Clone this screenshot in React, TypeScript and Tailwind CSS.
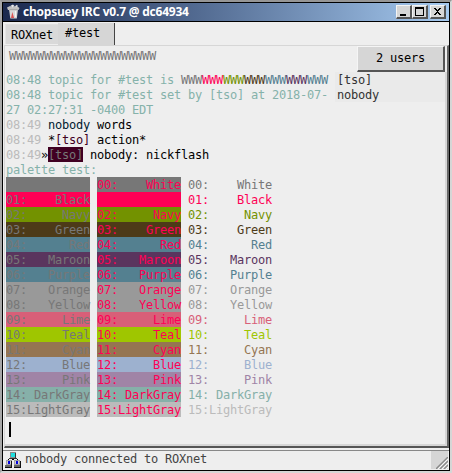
import React from "react";

const palette = [
  { name: "White", color: "#777777" },
  { name: "Black", color: "#ff0055" },
  { name: "Navy", color: "#739200" },
  { name: "Green", color: "#4d3a18" },
  { name: "Red", color: "#548090" },
  { name: "Maroon", color: "#5a355e" },
  { name: "Purple", color: "#548090" },
  { name: "Orange", color: "#999999" },
  { name: "Yellow", color: "#999999" },
  { name: "Lime", color: "#d85f78" },
  { name: "Teal", color: "#9fc600" },
  { name: "Cyan", color: "#957552" },
  { name: "Blue", color: "#9db1cf" },
  { name: "Pink", color: "#a084a6" },
  { name: "DarkGray", color: "#86b0a9" },
  { name: "LightGray", color: "#bbbbbb" },
];

const label = (i: number, name: string) => String(i).padStart(2, "0") + ":" + name.padStart(9, " ");

function PaletteRow({ index }: { index: number }) {
  const { name, color } = palette[index];
  const text = label(index, name);
  return (
    <div className="flex h-[15px] gap-[7px]">
      <span className="w-[84px] text-[#777777]" style={{ backgroundColor: color }}>{text}</span>
      <span className="w-[84px] text-[#ff0055]" style={{ backgroundColor: color }}>{text}</span>
      <span className="w-[84px]" style={{ color }}>{text}</span>
    </div>
  );
}

function TitleButton({ children, className = "" }: { children: React.ReactNode; className?: string }) {
  return (
    <div className={"h-[14px] w-4 border-t border-l border-b-2 border-r-2 border-t-[#f4f4f4] border-l-[#f4f4f4] border-b-[#555] border-r-[#555] bg-[#d6d6d6] " + className}>
      <svg width="13" height="11" viewBox="0 0 13 11" shapeRendering="crispEdges">{children}</svg>
    </div>
  );
}

function TrashIcon() {
  return (
    <svg width="13" height="16" viewBox="0 0 13 16">
      <path d="M2 5h9l-1.2 9.5H3.3z" fill="#d8d8d8" />
      <path d="M0 3.5L3 2l3 1 3-1.5L12.5 4l-1 2H1z" fill="#c2c2c2" />
      <path d="M3.5 1.8l2.5-1.3L7.500 2l-2 1.500zM9 .8l2 1-1.500 1.700z" fill="#e9e9e9" />
      <path d="M2.500 5.700h8" stroke="#999" strokeWidth=".8" />
      <path d="M5.300 8l1.800 6H4z" fill="#dc5555" />
      <path d="M8.500 7v6" stroke="#f5f5f5" />
    </svg>
  );
}

function NetworkIcon() {
  return (
    <svg width="16" height="16" viewBox="0 0 16 16" shapeRendering="crispEdges">
      <path d="M5 0h6v6H5z" fill="#8a8a8a" />
      <path d="M6 1h4v4H6z" fill="#20dede" />
      <path d="M10 1h1v5h-1zM4 6h8v1H4z" fill="#333" />
      <path d="M7 7h2v1H7zM3 7h1v1H3zM12 7h1v1h-1z" fill="#000" />
      <path d="M1 8h6v5H1zM9 8h6v5H9z" fill="#a0a0a0" />
      <path d="M2 9h4v3H2zM10 9h4v3h-4z" fill="#d0d0d0" />
      <path d="M3 9h2v3H3zM11 9h2v3h-2z" fill="#0000e0" />
      <path d="M0 13h7v2H0zM9 13h7v2H9z" fill="#666" />
      <path d="M0 15h7v1H0zM9 15h7v1H9zM6 9h1v6H6zM15 9h1v6h-1z" fill="#111" />
    </svg>
  );
}

export default function App() {
  return (
    <div className="flex h-[473px] w-[452px] flex-col overflow-hidden border-t-2 border-r-2 border-b-2 border-l-2 border-t-[#969696] border-r-[#d6d6d6] border-b-[#d6d6d6] border-l-[#a8a8a8] bg-[#eeeeee] font-['DejaVu_Sans_Mono','Liberation_Mono',monospace] text-[12px] leading-[15px] tracking-[-0.224px] whitespace-pre">
      <div className="flex min-h-0 flex-1 flex-col border border-black">
        <header className="flex h-[19px] shrink-0 items-center border-b border-black bg-linear-to-r from-[#1b294e] to-[#a6caf0] pr-[3px] pl-1">
          <TrashIcon />
          <span className="ml-[3px] flex-1 font-['Open_Sans','Noto_Sans',sans-serif] text-[12px] leading-[18px] font-bold tracking-[-0.22px] text-white">chopsuey IRC v0.7 @ dc64934</span>
          <TitleButton><path d="M3 8h6v2H3z" fill="#000" /></TitleButton>
          <TitleButton><path d="M2 1h9v9H2zM3 3v6h7V3z" fill="#000" fillRule="evenodd" /></TitleButton>
          <TitleButton className="ml-[2px]"><path d="M3 2h2v1h1v1h1v-1h1v-1h2v1H9v1H8v1H7v1h1v1h1v1h1v1H8v-1H7v-1H6v1H5v1H3v-1h1v-1h1v-1h1v-1H5v-1H4v-1H3z" fill="#000" /></TitleButton>
        </header>

        <nav className="flex h-[23px] shrink-0 items-start pl-[2px] text-black">
          <div className="mt-[2px] h-5 w-[53px] border-t border-l border-t-[#dedede] border-l-[#e4e4e4] bg-[#d9d9d9] pt-[3px] pl-[5px]">ROXnet</div>
          <div className="mt-px h-[22px] w-[57px] border-r border-r-[#444] bg-[#d6d6d6] pt-[3px] pl-[7px]">#test</div>
        </nav>

        <main className="ml-[1px] flex min-h-0 flex-1 flex-col border-t border-r-2 border-b-2 border-l border-t-[#d6d6d6] border-r-[#666] border-b-[#555] border-l-[#d6d6d6]">
          <div className="flex h-[26px] shrink-0 justify-between pr-[2px] pl-1">
            <span className="pt-[3px] text-[#777777]">WWWWWWWWWWWWWWWWWWWWW</span>
            <button className="h-[26px] w-[88px] border-t border-r-2 border-b-2 border-l border-t-[#f5f5f5] border-r-[#555] border-b-[#555] border-l-[#f5f5f5] bg-[#d6d6d6] text-black">2 users</button>
          </div>
          <div className="flex min-h-0 flex-1 border-r-2 border-b-2 border-[#d6d6d6] pl-px leading-[17px]">
            <section className="w-[329px] text-[#85b2aa] [&_p]:h-[15px]">
              <p>08:48 topic for #test is <span className="text-[#777777]">WWW</span><span className="text-[#ff0055]">WWW</span><span className="text-[#739200]">WWW</span><span className="text-[#4d3a18]">WWW</span><span className="text-[#548090]">WWW</span><span className="text-[#5a355e]">WWW</span><span className="text-[#548090]">WWW</span></p>
              <p>08:48 topic for #test set by [tso] at 2018-07-</p>
              <p>27 02:27:31 -0400 EDT</p>
              <p className="text-black"><span className="text-[#bbbbbb]">08:49</span> <span className="text-[#001a30]">nobody</span> words</p>
              <p className="text-black"><span className="text-[#bbbbbb]">08:49</span> *<span className="text-[#400022]">[tso]</span> action*</p>
              <p className="flex text-black"><span className="text-[#bbbbbb]">08:49</span>»<span className="bg-[#400022] text-[#777777]">[tso]</span> nobody: nickflash</p>
              <p>palette test:</p>
              {palette.map((entry, i) => <PaletteRow key={entry.name} index={i} />)}
              <div className="mt-[5px] ml-[3px] h-[15px] w-[2px] bg-black" />
            </section>
            <aside className="h-[30px] flex-1 bg-[#eaeaea] pl-[2px] text-[#333]">
              <div className="h-[15px]">[tso]</div>
              <div className="h-[15px]">nobody</div>
            </aside>
          </div>
        </main>

        <footer className="mt-[2px] flex h-5 shrink-0 border-t border-[#888] pl-[2px] text-[#444]">
          <div className="mt-px"><NetworkIcon /></div>
          <span className="flex-1 pt-px pl-1">nobody connected to ROXnet</span>
          <div className="mr-px flex h-[18px] w-[17px] items-end justify-end bg-[#d6d6d6]">
            <svg width="12" height="12" viewBox="0 0 12 12">
              <path d="M0 12L12 0M4 12l8-8M8 12l4-4" stroke="#888" strokeWidth="1.4" />
              <path d="M2 12L12 2M6 12l6-6M10 12l2-2" stroke="#fff" strokeWidth=".8" />
            </svg>
          </div>
        </footer>
      </div>
    </div>
  );
}
